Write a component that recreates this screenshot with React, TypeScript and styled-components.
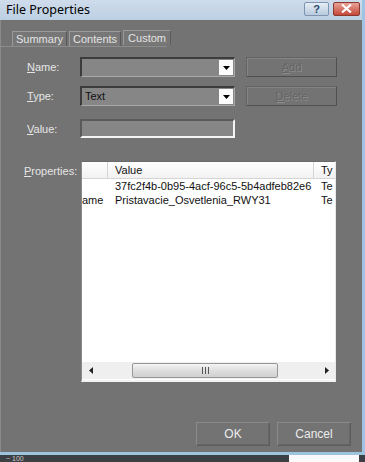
import React from 'react';
import styled, { createGlobalStyle } from 'styled-components';

/* global */
const Global = createGlobalStyle`
  html, body {
    margin: 0;
    padding: 0;
    background: #3a3d40;
  }
  body {
    width: 365px;
    height: 462px;
    overflow: hidden;
    font-family: "Liberation Sans", Arial, sans-serif;
    font-size: 11px;
  }
`

interface Prop {
  name: string
  value: string
  type: string
}

const props: Prop[] = [
  { name: 'GUID', value: '37fc2f4b-0b95-4acf-96c5-5b4adfeb82e6', type: 'Text' },
  { name: 'LayerName', value: 'Pristavacie_Osvetlenia_RWY31', type: 'Text' },
]

const Arrow = () => (
  <svg width="7" height="4" viewBox="0 0 7 4">
    <path d="M0 0h7L3.5 4z" fill="#000" />
  </svg>
)

export default function App() {
  return (
    <>
      <Global />
      <Window>
        <TitleBar>
          <Title>File Properties</Title>
          <Caption>
            <HelpBtn>?</HelpBtn>
            <CloseBtn>
              <svg width="11" height="9" viewBox="0 0 11 9">
                <path d="M1 0.5l9 8M10 0.5l-9 8" stroke="#fff" strokeWidth="2.2" />
              </svg>
            </CloseBtn>
          </Caption>
        </TitleBar>
        <Body>
          <Tabs>
            <Tab>Summary</Tab>
            <Tab>Contents</Tab>
            <Tab $active>Custom</Tab>
          </Tabs>
          <Form>
            <Label><u>N</u>ame:</Label>
            <Combo>
              <ComboText />
              <DropBtn><Arrow /></DropBtn>
            </Combo>
            <SideButton><u>A</u>dd</SideButton>

            <Label $row={2}><u>T</u>ype:</Label>
            <Combo $row={2}>
              <ComboText>Text</ComboText>
              <DropBtn><Arrow /></DropBtn>
            </Combo>
            <SideButton $row={2}><u>D</u>elete</SideButton>

            <Label $row={3} $end><u>V</u>alue:</Label>
            <ValueBox $row={3} />
          </Form>
          <PropsArea>
            <PropLabel><u>P</u>roperties:</PropLabel>
            <List>
              <ListScroll>
                <HeaderRow>
                  <HeadCell $w={26} />
                  <HeadCell $w={206}>Value</HeadCell>
                  <HeadCell $w={21}>Ty</HeadCell>
                </HeaderRow>
                {props.map(p => (
                  <Row key={p.name}>
                    <Cell $w={26} $right>{p.name === 'LayerName' ? 'ame' : ''}</Cell>
                    <Cell $w={206}>{p.value}</Cell>
                    <Cell $w={21}>{p.type.slice(0, 2)}</Cell>
                  </Row>
                ))}
              </ListScroll>
              <HScroll>
                <ScrollArrow>
                  <svg width="4" height="7" viewBox="0 0 4 7"><path d="M4 0v7L0 3.5z" fill="#222" /></svg>
                </ScrollArrow>
                <Track>
                  <Thumb>
                    <svg width="9" height="7" viewBox="0 0 9 7">
                      <path d="M1.5 0v7M4.5 0v7M7.5 0v7" stroke="#555" strokeWidth="1" />
                    </svg>
                  </Thumb>
                </Track>
                <ScrollArrow>
                  <svg width="4" height="7" viewBox="0 0 4 7"><path d="M0 0v7L4 3.5z" fill="#222" /></svg>
                </ScrollArrow>
              </HScroll>
            </List>
          </PropsArea>
          <Footer>
            <DlgButton>OK</DlgButton>
            <DlgButton>Cancel</DlgButton>
          </Footer>
        </Body>
      </Window>
      <Taskbar>
        <TaskText>~ 100</TaskText>
        <TaskWhite />
      </Taskbar>
    </>
  )
}

/* style */
const Window = styled.div`
  width: 365px;
  height: 455px;
  box-sizing: border-box;
  display: flex;
  flex-direction: column;
  background: #aac6de;
  border-right: 3px solid #9fc3e0;
  border-bottom: 3px solid #9cc4de;
`

const TitleBar = styled.div`
  height: 20px;
  display: flex;
  align-items: center;
  justify-content: space-between;
  padding: 0 2px 0 6px;
  background: linear-gradient(#cfdceb, #bccfe3);
`

const Title = styled.div`
  font-family: "Noto Sans", "Open Sans", sans-serif;
  font-size: 12.5px;
  color: #000;
  margin-top: -1px;
`

const Caption = styled.div`
  display: flex;
  gap: 4px;
  margin-top: -3px;
`

const HelpBtn = styled.div`
  width: 25px;
  height: 14px;
  box-sizing: border-box;
  border: 1px solid #7d95b0;
  border-radius: 2px;
  background: linear-gradient(#e6eef6, #b9cade);
  color: #2a4a6a;
  font-family: "Liberation Sans", sans-serif;
  font-weight: bold;
  font-size: 11px;
  line-height: 12px;
  text-align: center;
`

const CloseBtn = styled.div`
  width: 27px;
  height: 14px;
  box-sizing: border-box;
  border: 1px solid #8a3a30;
  border-radius: 2px;
  background: linear-gradient(#e7a396, #c6463a);
  display: flex;
  align-items: center;
  justify-content: center;
`

const Body = styled.div`
  flex: 1;
  background: #737373;
  display: flex;
  flex-direction: column;
  padding: 10px 0 6px 0;
  border-left: 1px solid #8a8a8a;
`

const Tabs = styled.div`
  display: flex;
  padding-left: 11px;
  gap: 2px;
  border-bottom: 1px solid #8c8c8c;
  margin-right: 195px;
`

const Tab = styled.div<{ $active?: boolean }>`
  height: 14px;
  line-height: 14px;
  padding: 0 ${p => (p.$active ? '4px' : '3px')};
  margin-top: ${p => (p.$active ? '0' : '1px')};
  color: #e4e4e4;
  font-size: 11px;
  border-left: 1px solid #9a9a9a;
  border-top: 1px solid #9a9a9a;
  border-right: 1px solid #5a5a5a;
  background: #777;
`

const Form = styled.div`
  display: grid;
  grid-template-columns: 55px 155px 11px 91px;
  grid-template-rows: 20px 20px 23px;
  row-gap: 9px;
  padding-left: 24px;
  margin-top: 10px;
  & > * {
    align-self: center;
  }
`

const Label = styled.div<{ $row?: number; $end?: boolean }>`
  grid-row: ${p => p.$row || 1};
  grid-column: 1;
  color: #e6e6e6;
  padding-left: 2px;
  font-size: 11px;
  && {
    align-self: ${p => (p.$end ? 'end' : 'center')};
    margin-bottom: ${p => (p.$end ? '3px' : '0')};
  }
`

const Combo = styled.div<{ $row?: number }>`
  grid-row: ${p => p.$row || 1};
  grid-column: 2;
  height: 20px;
  box-sizing: border-box;
  display: flex;
  border-top: 2px solid #3c3c3c;
  border-left: 2px solid #3c3c3c;
  border-right: 1px solid #a8a8a8;
  border-bottom: 1px solid #a8a8a8;
  background: #868686;
`

const ComboText = styled.div`
  flex: 1;
  padding-left: 3px;
  line-height: 17px;
  color: #101010;
  font-size: 11px;
`

const DropBtn = styled.div`
  width: 14px;
  margin: 1px 1px 1px 0;
  background: #fbfbfb;
  display: flex;
  align-items: center;
  justify-content: center;
`

const SideButton = styled.div<{ $row?: number }>`
  grid-row: ${p => p.$row || 1};
  grid-column: 4;
  height: 20px;
  box-sizing: border-box;
  border: 1px solid #636363;
  border-right-color: #505050;
  border-bottom-color: #505050;
  box-shadow: inset 1px 1px 0 #858585;
  color: #646464;
  text-shadow: 1px 1px 0 #8e8e8e;
  font-size: 11px;
  text-align: center;
  line-height: 18px;
`

const ValueBox = styled.div<{ $row?: number }>`
  grid-row: ${p => p.$row || 1};
  grid-column: 2;
  height: 19px;
  box-sizing: border-box;
  border-top: 2px solid #5a5a5a;
  border-left: 2px solid #5a5a5a;
  border-right: 2px solid #f4f4f4;
  border-bottom: 2px solid #f4f4f4;
  background: #868686;
  && {
    align-self: end;
  }
`

const PropsArea = styled.div`
  display: flex;
  margin-top: 23px;
  padding-left: 23px;
`

const PropLabel = styled.div`
  width: 57px;
  color: #e6e6e6;
  padding-top: 4px;
  font-size: 11px;
`

const List = styled.div`
  width: 255px;
  height: 221px;
  box-sizing: border-box;
  background: #fff;
  border-top: 1px solid #6a6a6a;
  border-left: 1px solid #8a8a8a;
  border-right: 1px solid #e8e8e8;
  border-bottom: 2px solid #f2f2f2;
  display: flex;
  flex-direction: column;
  overflow: hidden;
`

const ListScroll = styled.div`
  flex: 1;
  overflow: hidden;
`

const HeaderRow = styled.div`
  display: flex;
  height: 16px;
  background: linear-gradient(#ffffff, #f2f2f2);
  border-bottom: 1px solid #d5d5d5;
`

const HeadCell = styled.div<{ $w: number }>`
  width: ${p => p.$w}px;
  flex: none;
  box-sizing: border-box;
  border-right: 1px solid #d5d5d5;
  padding-left: 7px;
  line-height: 16px;
  font-size: 11px;
  color: #111;
  white-space: nowrap;
  overflow: hidden;
  &:last-child {
    border-right: none;
  }
`

const Row = styled.div`
  display: flex;
  height: 14px;
  &:first-of-type {
    margin-top: 2px;
  }
`

const Cell = styled.div<{ $w: number; $right?: boolean }>`
  width: ${p => p.$w}px;
  flex: none;
  padding-left: ${p => (p.$right ? '0' : '7px')};
  box-sizing: border-box;
  line-height: 14px;
  font-size: 11px;
  color: #111;
  white-space: nowrap;
  overflow: hidden;
`

const HScroll = styled.div`
  height: 17px;
  display: flex;
  background: #efefef;
  margin-bottom: 1px;
`

const ScrollArrow = styled.div`
  width: 17px;
  display: flex;
  align-items: center;
  justify-content: center;
`

const Track = styled.div`
  flex: 1;
  display: flex;
  padding: 1px 40px 1px 33px;
`

const Thumb = styled.div`
  flex: 1;
  box-sizing: border-box;
  border: 1px solid #979797;
  border-radius: 2px;
  background: linear-gradient(#f4f4f4, #dedede 50%, #d0d0d0);
  display: flex;
  align-items: center;
  justify-content: center;
`

const Footer = styled.div`
  margin-top: auto;
  display: flex;
  justify-content: flex-end;
  gap: 7px;
  padding-right: 11px;
`

const DlgButton = styled.div`
  width: 74px;
  height: 24px;
  box-sizing: border-box;
  border: 1px solid #5c5c5c;
  border-top-color: #8a8a8a;
  border-left-color: #8a8a8a;
  box-shadow: inset -1px -1px 0 #666;
  color: #ececec;
  font-size: 12px;
  text-align: center;
  line-height: 22px;
`

const Taskbar = styled.div`
  height: 7px;
  display: flex;
  align-items: center;
  background: #3c4044;
  overflow: hidden;
`

const TaskText = styled.div`
  color: #c8c8c8;
  font-size: 7px;
  padding-left: 6px;
  line-height: 7px;
  flex: 1;
`

const TaskWhite = styled.div`
  width: 70px;
  height: 7px;
  background: #fafafa;
  margin-right: 6px;
`
